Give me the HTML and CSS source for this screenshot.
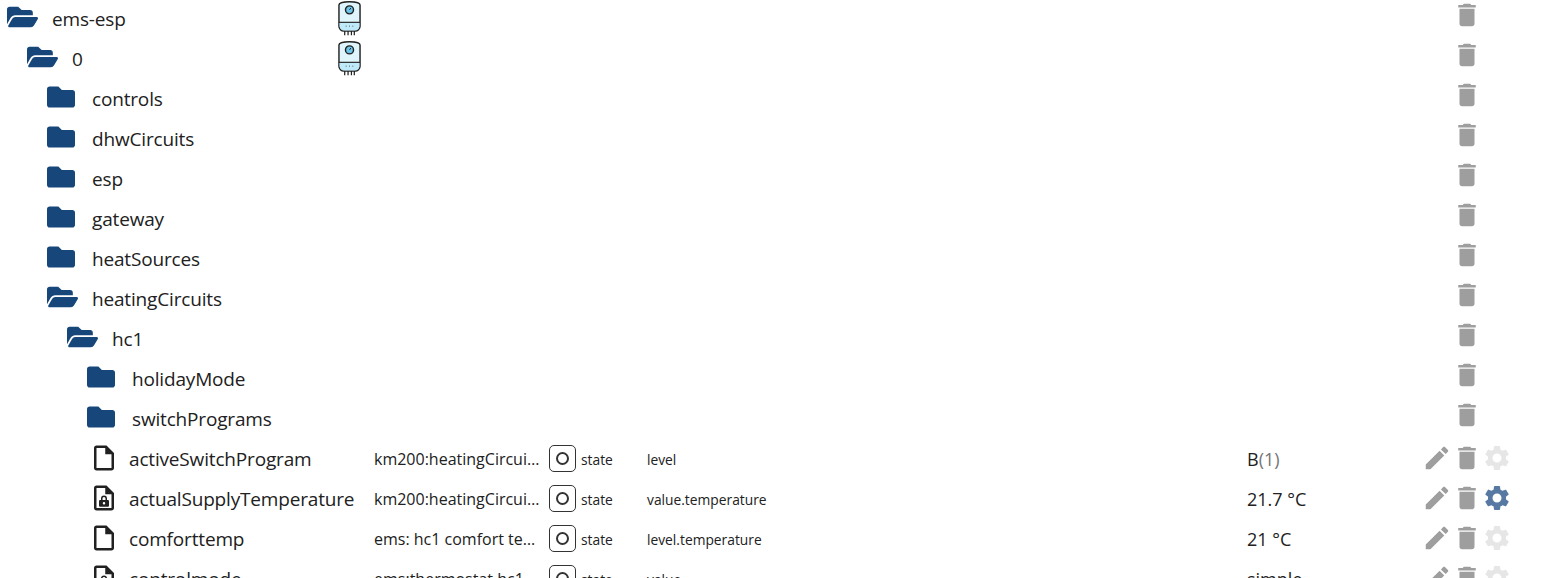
FILE: index.html
```html
<!DOCTYPE html>
<html lang="en">
<head>
    <meta charset="UTF-8">
    <meta name="viewport" content="width=device-width, initial-scale=1.0">
    <title>ems-esp objects</title>
    <link rel="stylesheet" href="styles.css">
</head>
<body>
    <svg class="icon-defs" aria-hidden="true">
        <symbol id="i-folder-open" viewBox="0 0 576 512"><path d="M572.694 292.093L500.27 416.248A63.997 63.997 0 0 1 444.989 448H45.025c-18.523 0-30.064-20.093-20.731-36.093l72.424-124.155A64 64 0 0 1 152 256h399.964c18.523 0 30.064 20.093 20.73 36.093zM152 224h328v-48c0-26.51-21.49-48-48-48H272l-64-64H48C21.49 64 0 85.49 0 112v278.046l69.077-118.418C86.214 242.25 117.989 224 152 224z"/></symbol>
        <symbol id="i-folder" viewBox="0 0 512 512"><path d="M464 128H272l-64-64H48C21.49 64 0 85.49 0 112v288c0 26.51 21.49 48 48 48h416c26.51 0 48-21.49 48-48V176c0-26.51-21.49-48-48-48z"/></symbol>
        <symbol id="i-file" viewBox="0 0 24 24"><path d="M14 2H6c-1.1 0-1.99.9-1.99 2L4 20c0 1.1.89 2 1.99 2H18c1.1 0 2-.9 2-2V8l-6-6zM6 20V4h7v5h5v11H6z"/></symbol>
        <symbol id="i-file-lock" viewBox="0 0 24 24"><path d="M14 2H6c-1.1 0-1.99.9-1.99 2L4 20c0 1.1.89 2 1.99 2H18c1.1 0 2-.9 2-2V8l-6-6zM6 20V4h7v5h5v11H6z"/><path d="M15 13.5h-.6v-1.2a2.4 2.4 0 0 0-4.8 0v1.2H9c-.55 0-1 .45-1 1V18c0 .55.45 1 1 1h6c.55 0 1-.45 1-1v-3.5c0-.55-.45-1-1-1zm-4.2-1.2a1.2 1.2 0 0 1 2.4 0v1.2h-2.4v-1.2zM12 17.2a1 1 0 1 1 0-2 1 1 0 0 1 0 2z"/></symbol>
        <symbol id="i-edit" viewBox="0 0 24 24"><path d="M3 17.25V21h3.75L17.81 9.94l-3.75-3.75L3 17.25zM20.71 7.04c.39-.39.39-1.02 0-1.41l-2.34-2.34c-.39-.39-1.02-.39-1.41 0l-1.83 1.83 3.75 3.75 1.83-1.83z"/></symbol>
        <symbol id="i-delete" viewBox="0 0 24 24"><path d="M6 19c0 1.1.9 2 2 2h8c1.1 0 2-.9 2-2V7H6v12zM19 4h-3.5l-1-1h-5l-1 1H5v2h14V4z"/></symbol>
        <symbol id="i-settings" viewBox="0 0 24 24"><path d="M19.14 12.94c.04-.3.06-.61.06-.94 0-.32-.02-.64-.07-.94l2.03-1.58c.18-.14.23-.41.12-.61l-1.92-3.32c-.12-.22-.37-.29-.59-.22l-2.39.96c-.5-.38-1.03-.7-1.62-.94l-.36-2.54c-.04-.24-.24-.41-.48-.41h-3.84c-.24 0-.43.17-.47.41l-.36 2.54c-.59.24-1.13.57-1.62.94l-2.39-.96c-.22-.08-.47 0-.59.22L2.74 8.87c-.12.21-.08.47.12.61l2.03 1.58c-.05.3-.09.63-.09.94s.02.64.07.94l-2.03 1.58c-.18.14-.23.41-.12.61l1.92 3.32c.12.22.37.29.59.22l2.39-.96c.5.38 1.03.7 1.62.94l.36 2.54c.05.24.24.41.48.41h3.84c.24 0 .44-.17.47-.41l.36-2.54c.59-.24 1.13-.56 1.62-.94l2.39.96c.22.08.47 0 .59-.22l1.92-3.32c.12-.22.07-.47-.12-.61l-2.01-1.58zM12 15.6c-1.98 0-3.6-1.62-3.6-3.6s1.62-3.6 3.6-3.6 3.6 1.62 3.6 3.6-1.62 3.6-3.6 3.6z"/></symbol>
        <symbol id="i-boiler" viewBox="0 0 24 37">
            <path d="M7 31v5M10.500 31v5M14 31v5M17 31v5" fill="none" stroke="#222" stroke-width="1.3"/>
            <path d="M1 4.500C1 2.500 6 1 12 1s11 1.500 11 3.500v22c0 3-2.500 5-5 5H6c-2.500 0-5-2-5-5z" fill="#dff5fb" stroke="#222" stroke-width="1.500"/>
            <path d="M1.700 22.500h20.600v4c0 2.600-2.200 4.400-4.400 4.400H6.100c-2.200 0-4.400-1.800-4.400-4.400z" fill="#bfeafa"/>
            <path d="M1 22.500h22" stroke="#222" stroke-width="1.200"/>
            <circle cx="12" cy="9.500" r="4.200" fill="#6cc5e8" stroke="#222" stroke-width="1.500"/>
            <path d="M12 9.500l1.500-2" stroke="#222"/>
            <path d="M8 26.500h1M11.500 26.500h1M15 26.500h1" stroke="#555"/>
        </symbol>
    </svg>

    <div class="tree">
        <div class="row">
            <div class="tree-cell level-0"><svg class="folder-open"><use href="#i-folder-open"/></svg><span class="name">ems-esp</span></div>
            <svg class="boiler"><use href="#i-boiler"/></svg>
            <div class="actions group"><span class="act-slot"></span><svg class="act"><use href="#i-delete"/></svg></div>
        </div>
        <div class="row">
            <div class="tree-cell level-1"><svg class="folder-open"><use href="#i-folder-open"/></svg><span class="name">0</span></div>
            <svg class="boiler"><use href="#i-boiler"/></svg>
            <div class="actions group"><span class="act-slot"></span><svg class="act"><use href="#i-delete"/></svg></div>
        </div>
        <div class="row">
            <div class="tree-cell level-2"><svg class="folder"><use href="#i-folder"/></svg><span class="name">controls</span></div>
            <div class="actions group"><span class="act-slot"></span><svg class="act"><use href="#i-delete"/></svg></div>
        </div>
        <div class="row">
            <div class="tree-cell level-2"><svg class="folder"><use href="#i-folder"/></svg><span class="name">dhwCircuits</span></div>
            <div class="actions group"><span class="act-slot"></span><svg class="act"><use href="#i-delete"/></svg></div>
        </div>
        <div class="row">
            <div class="tree-cell level-2"><svg class="folder"><use href="#i-folder"/></svg><span class="name">esp</span></div>
            <div class="actions group"><span class="act-slot"></span><svg class="act"><use href="#i-delete"/></svg></div>
        </div>
        <div class="row">
            <div class="tree-cell level-2"><svg class="folder"><use href="#i-folder"/></svg><span class="name">gateway</span></div>
            <div class="actions group"><span class="act-slot"></span><svg class="act"><use href="#i-delete"/></svg></div>
        </div>
        <div class="row">
            <div class="tree-cell level-2"><svg class="folder"><use href="#i-folder"/></svg><span class="name">heatSources</span></div>
            <div class="actions group"><span class="act-slot"></span><svg class="act"><use href="#i-delete"/></svg></div>
        </div>
        <div class="row">
            <div class="tree-cell level-2"><svg class="folder-open"><use href="#i-folder-open"/></svg><span class="name">heatingCircuits</span></div>
            <div class="actions group"><span class="act-slot"></span><svg class="act"><use href="#i-delete"/></svg></div>
        </div>
        <div class="row">
            <div class="tree-cell level-3"><svg class="folder-open"><use href="#i-folder-open"/></svg><span class="name">hc1</span></div>
            <div class="actions group"><span class="act-slot"></span><svg class="act"><use href="#i-delete"/></svg></div>
        </div>
        <div class="row">
            <div class="tree-cell level-4"><svg class="folder"><use href="#i-folder"/></svg><span class="name">holidayMode</span></div>
            <div class="actions group"><span class="act-slot"></span><svg class="act"><use href="#i-delete"/></svg></div>
        </div>
        <div class="row">
            <div class="tree-cell level-4"><svg class="folder"><use href="#i-folder"/></svg><span class="name">switchPrograms</span></div>
            <div class="actions group"><span class="act-slot"></span><svg class="act"><use href="#i-delete"/></svg></div>
        </div>

        <div class="row">
            <div class="tree-cell leaf level-4"><svg class="file"><use href="#i-file"/></svg><span class="name">activeSwitchProgram</span></div>
            <span class="desc">km200:heatingCircuits.hc1.activeSwitchProgram</span>
            <span class="type-box"><i class="type-dot"></i></span>
            <span class="role">state</span>
            <span class="subrole">level</span>
            <span class="value">B<span class="raw">(1)</span></span>
            <div class="actions"><svg class="act"><use href="#i-edit"/></svg><svg class="act"><use href="#i-delete"/></svg><svg class="act off"><use href="#i-settings"/></svg></div>
        </div>
        <div class="row">
            <div class="tree-cell leaf level-4"><svg class="file"><use href="#i-file-lock"/></svg><span class="name">actualSupplyTemperature</span></div>
            <span class="desc">km200:heatingCircuits.hc1.actualSupplyTemperature</span>
            <span class="type-box"><i class="type-dot"></i></span>
            <span class="role">state</span>
            <span class="subrole">value.temperature</span>
            <span class="value">21.7 °C</span>
            <div class="actions"><svg class="act"><use href="#i-edit"/></svg><svg class="act"><use href="#i-delete"/></svg><svg class="act on"><use href="#i-settings"/></svg></div>
        </div>
        <div class="row">
            <div class="tree-cell leaf level-4"><svg class="file"><use href="#i-file"/></svg><span class="name">comforttemp</span></div>
            <span class="desc">ems: hc1 comfort temperature</span>
            <span class="type-box"><i class="type-dot"></i></span>
            <span class="role">state</span>
            <span class="subrole">level.temperature</span>
            <span class="value">21 °C</span>
            <div class="actions"><svg class="act"><use href="#i-edit"/></svg><svg class="act"><use href="#i-delete"/></svg><svg class="act off"><use href="#i-settings"/></svg></div>
        </div>
        <div class="row">
            <div class="tree-cell leaf level-4"><svg class="file"><use href="#i-file-lock"/></svg><span class="name">controlmode</span></div>
            <span class="desc">ems:thermostat.hc1.controlmode</span>
            <span class="type-box"><i class="type-dot"></i></span>
            <span class="role">state</span>
            <span class="subrole">value</span>
            <span class="value">simple</span>
            <div class="actions"><svg class="act"><use href="#i-edit"/></svg><svg class="act"><use href="#i-delete"/></svg><svg class="act off"><use href="#i-settings"/></svg></div>
        </div>
    </div>
</body>
</html>
```

FILE: styles.css
```css
html, body {
    margin: 0;
    padding: 0;
    height: 100%;
    overflow: hidden;
    background: #fff;
}
body {
    font-family: 'Open Sans', 'Noto Sans', Arial, sans-serif;
    color: #212121;
}
.icon-defs {
    display: none;
}
.tree {
    margin-top: -2px;
}
.row {
    display: flex;
    align-items: center;
    height: 40px;
    padding-right: 35px;
}
.tree-cell {
    display: flex;
    align-items: center;
    box-sizing: border-box;
    width: 338px;
    flex: none;
}
.tree-cell.leaf {
    width: 374px;
}
.level-0 { padding-left: 7px; }
.level-1 { padding-left: 27px; }
.level-2 { padding-left: 47px; }
.level-3 { padding-left: 67px; }
.level-4 { padding-left: 87px; }
.name {
    padding-top: 2px;
    font-size: 19px;
    white-space: nowrap;
    letter-spacing: -0.17px;
}
.folder, .folder-open {
    flex: none;
    height: 28px;
    margin-top: -2px;
    margin-right: 17px;
    fill: #17467a;
}
.folder {
    width: 28px;
}
.folder-open {
    width: 31px;
    margin-right: 14px;
}
.file {
    flex: none;
    width: 30px;
    height: 30px;
    margin-right: 10px;
    margin-left: 2px;
    fill: #212121;
}
.boiler {
    width: 23px;
    height: 37px;
    margin-top: 1px;
    flex: none;
}
.desc {
    width: 171px;
    padding-top: 2px;
    flex: none;
    font-size: 16px;
    white-space: nowrap;
    overflow: hidden;
    text-overflow: ellipsis;
}
.type-box {
    display: flex;
    align-items: center;
    justify-content: center;
    box-sizing: border-box;
    width: 27px;
    height: 27px;
    margin-left: 4px;
    border: 1.5px solid #333;
    border-radius: 5px;
    flex: none;
}
.type-dot {
    display: block;
    box-sizing: border-box;
    width: 13px;
    height: 13px;
    border: 2px solid #333;
    border-radius: 50%;
}
.role {
    width: 66px;
    margin-left: 5px;
    padding-top: 2px;
    flex: none;
    font-size: 13.8px;
}
.subrole {
    width: 600px;
    padding-top: 2px;
    flex: none;
    font-size: 13.8px;
}
.value {
    padding-top: 2px;
    font-size: 18px;
    white-space: nowrap;
}
.raw {
    color: #757575;
}
.actions {
    display: flex;
    margin-left: auto;
    width: 90px;
    flex: none;
}
.actions.group {
    margin-top: -6px;
}
.act, .act-slot {
    width: 30px;
    height: 30px;
    flex: none;
    fill: #9e9e9e;
}
.act.off {
    fill: #e6e6e6;
}
.act.on {
    fill: #5778a3;
}
```
